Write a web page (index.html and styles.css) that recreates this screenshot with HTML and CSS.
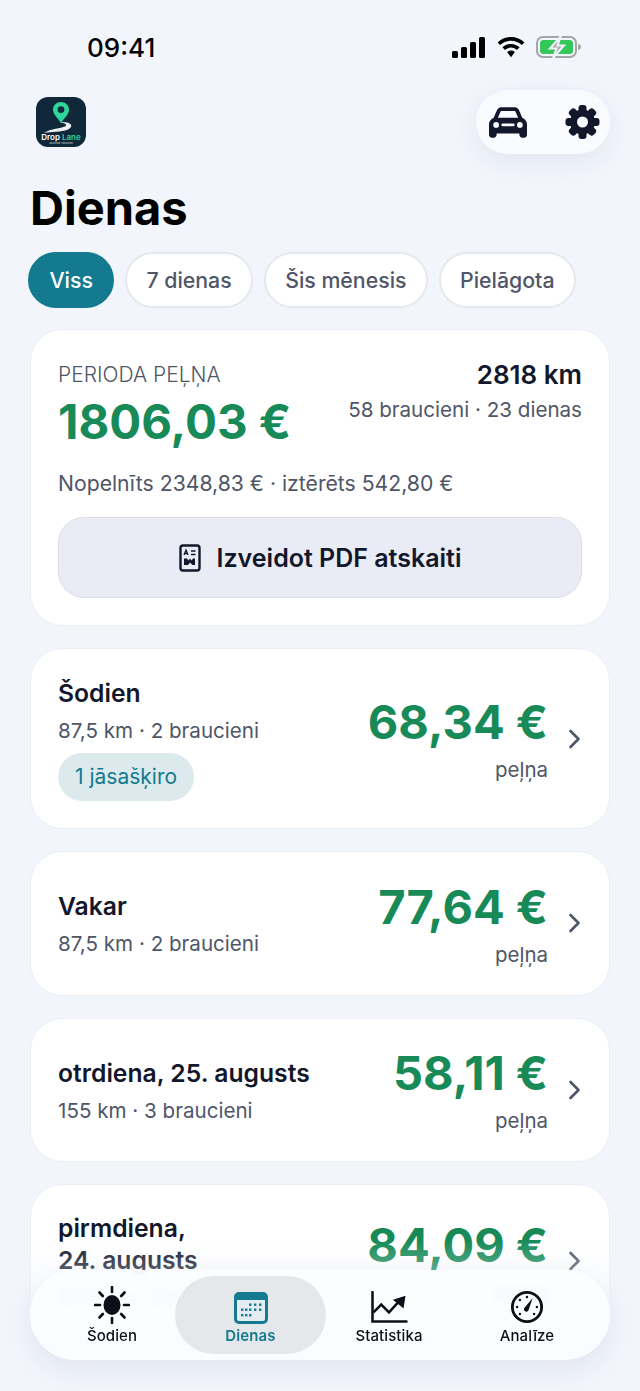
FILE: index.html
```html
<!DOCTYPE html>
<html lang="lv">
<head>
    <meta charset="UTF-8">
    <meta name="viewport" content="width=device-width, initial-scale=1.0">
    <title>Dienas</title>
    <link rel="stylesheet" href="styles.css">
</head>

<body>
    <div class="screen">
        <div class="status_bar">
            <span class="status_time">09:41</span>
            <div class="status_icons">
                <svg width="34" height="21" viewBox="0 0 34 21"><rect x="0" y="14" width="6" height="7" rx="1.5"/><rect x="9" y="10" width="6" height="11" rx="1.5"/><rect x="18" y="5" width="6" height="16" rx="1.5"/><rect x="27" y="0" width="6" height="21" rx="1.5"/></svg>
                <svg width="28" height="21" viewBox="0 0 28 21"><path d="M14 0C8.800 0 4.200 2 .6 5.400l2.500 2.700C6 5.300 9.800 3.700 14 3.700s8 1.600 10.900 4.400l2.500-2.700C23.800 2 19.200 0 14 0z"/><path d="M14 6.900c-3.300 0-6.300 1.300-8.600 3.400L8 13c1.600-1.500 3.700-2.400 6-2.400s4.400.9 6 2.400l2.600-2.700c-2.300-2.100-5.300-3.400-8.600-3.400z"/><path d="M14 13.600c-1.500 0-2.900.6-3.900 1.500l3.900 5.200 3.900-5.200c-1-.9-2.400-1.500-3.900-1.500z"/></svg>
                <svg width="46" height="22" viewBox="0 0 46 22"><rect x="1" y="1" width="39" height="20" rx="6" fill="none" stroke="#a3a7a6" stroke-width="2"/><rect x="4" y="4" width="33" height="14" rx="3.500" fill="#34c759"/><path d="M42 8c2 .4 3 1.500 3 3s-1 2.600-3 3z" fill="#a3a7a6"/><path d="M25 0 14 12.500h6.500L17 22l11-12.500h-6.500z" fill="#a9adae" stroke="#f2f5fc" stroke-width="2"/></svg>
            </div>
        </div>

        <div class="top_row">
            <div class="app_logo">
                <svg class="app_logo_art" width="50" height="32" viewBox="0 0 50 32"><path d="M25 0c-4.400 0-8 3.300-8 7.600 0 5.200 5.700 9.600 8 13.400 2.300-3.800 8-8.200 8-13.400C33 3.300 29.400 0 25 0z" fill="#2fd69a"/><circle cx="25" cy="7.600" r="3.400" fill="#10283a"/><path d="M24 20c5 1.500 8 2.500 5 4.500-4 1.800-14 2-21 6.500 7-1.500 17-.5 24-3.500 5-2.300 4-6-1-7-2-.4-4-.6-7-.5z" fill="#eef2f4"/></svg>
                <div class="app_logo_name">Drop <b>Lane</b></div>
                <div class="app_logo_tag">MILEAGE TRACKER</div>
            </div>
            <div class="top_actions">
                <svg width="38" height="31" viewBox="0 0 40 32"><path d="M9.500 1.500C10.500.5 12 0 13.500 0h13c1.500 0 3 .5 4 1.500 1.200 1.200 3.500 7 4.500 9.500 2.500 1.300 5 3.500 5 6.500V29c0 1.700-1.300 3-3 3h-2c-1.700 0-3-1.300-3-3v-1.500H8V29c0 1.700-1.300 3-3 3H3c-1.700 0-3-1.300-3-3V17.500c0-3 2.500-5.200 5-6.500 1-2.500 3.300-8.300 4.500-9.500zM12.500 4 9.300 11h21.400l-3.200-7zM7.500 15.500a3 3 0 1 0 0 6 3 3 0 0 0 0-6zm25 0a3 3 0 1 0 0 6 3 3 0 0 0 0-6zM14.500 17a1.500 1.500 0 0 0 0 3h11a1.500 1.500 0 0 0 0-3z" fill="#12172b" fill-rule="evenodd"/></svg>
                <svg width="35" height="34" viewBox="0 0 34 34"><g fill="#12172b"><circle cx="17" cy="17" r="12.500"/><rect x="13" y="0" width="8" height="34" rx="3"/><rect x="13" y="0" width="8" height="34" rx="3" transform="rotate(45 17 17)"/><rect x="13" y="0" width="8" height="34" rx="3" transform="rotate(90 17 17)"/><rect x="13" y="0" width="8" height="34" rx="3" transform="rotate(135 17 17)"/></g><circle cx="17" cy="17" r="5.500" fill="#fafbfe"/></svg>
            </div>
        </div>

        <h1 class="page_title">Dienas</h1>

        <div class="chips">
            <span class="chip chip_active">Viss</span>
            <span class="chip">7 dienas</span>
            <span class="chip">Šis mēnesis</span>
            <span class="chip">Pielāgota</span>
        </div>

        <div class="card summary">
            <div class="summary_top">
                <div>
                    <div class="summary_label">PERIODA PEĻŅA</div>
                    <div class="summary_amount">1806,03 €</div>
                </div>
                <div class="summary_right">
                    <div class="summary_km">2818 km</div>
                    <div class="day_sub">58 braucieni · 23 dienas</div>
                </div>
            </div>
            <div class="summary_note">Nopelnīts 2348,83 € · iztērēts 542,80 €</div>
            <div class="pdf_button">
                <svg width="22" height="28" viewBox="0 0 22 28" fill="none" stroke="#12172b"><rect x="1.500" y="1.500" width="19" height="25" rx="2.500" stroke-width="2.400"/><path d="M5 11l2-5 2 5M5.800 9.500h2.400M12 7h4.500M12 10.500h4.500" stroke-width="1.300"/><path d="M5 21v-6.500h3l1.500 2 1.500-2 1.500 2 1.500-2h2V21h-2.500l-2.500-2.500L9 21z" fill="#12172b" stroke="none"/></svg>
                <span>Izveidot PDF atskaiti</span>
            </div>
        </div>

        <div class="card day day_today">
            <div class="day_left">
                <div class="day_name">Šodien</div>
                <div class="day_sub">87,5 km · 2 braucieni</div>
                <span class="day_badge">1 jāsašķiro</span>
            </div>
            <div class="day_right">
                <div class="day_amount">68,34 €</div>
                <div class="day_caption">peļņa</div>
            </div>
            <svg class="day_chevron" width="14" height="20" viewBox="0 0 14 20"><path d="M2.500 2l8 8-8 8" fill="none" stroke="#4f5668" stroke-width="2.600" stroke-linecap="round" stroke-linejoin="round"/></svg>
        </div>

        <div class="card day">
            <div class="day_left">
                <div class="day_name">Vakar</div>
                <div class="day_sub">87,5 km · 2 braucieni</div>
            </div>
            <div class="day_right">
                <div class="day_amount">77,64 €</div>
                <div class="day_caption">peļņa</div>
            </div>
            <svg class="day_chevron" width="14" height="20" viewBox="0 0 14 20"><path d="M2.500 2l8 8-8 8" fill="none" stroke="#4f5668" stroke-width="2.600" stroke-linecap="round" stroke-linejoin="round"/></svg>
        </div>

        <div class="card day">
            <div class="day_left">
                <div class="day_name">otrdiena, 25. augusts</div>
                <div class="day_sub">155 km · 3 braucieni</div>
            </div>
            <div class="day_right">
                <div class="day_amount">58,11 €</div>
                <div class="day_caption">peļņa</div>
            </div>
            <svg class="day_chevron" width="14" height="20" viewBox="0 0 14 20"><path d="M2.500 2l8 8-8 8" fill="none" stroke="#4f5668" stroke-width="2.600" stroke-linecap="round" stroke-linejoin="round"/></svg>
        </div>

        <div class="card day day_last">
            <div class="day_left">
                <div class="day_name">pirmdiena,<br>24. augusts</div>
                <div class="day_sub">87,5 km · 2 braucieni</div>
            </div>
            <div class="day_right">
                <div class="day_amount">84,09 €</div>
                <div class="day_caption">peļņa</div>
            </div>
            <svg class="day_chevron" width="14" height="20" viewBox="0 0 14 20"><path d="M2.500 2l8 8-8 8" fill="none" stroke="#4f5668" stroke-width="2.600" stroke-linecap="round" stroke-linejoin="round"/></svg>
        </div>

        <div class="bottom_fade"></div>

        <div class="tabbar">
            <div class="tab">
                <svg width="36" height="38" viewBox="0 0 36 38"><ellipse cx="18" cy="19" rx="8.500" ry="10" fill="#0c0f18"/><path d="M18 1v5M18 32v5M1 19h5M30 19h5M5.500 6.500l3.300 3.500M27.200 28l3.300 3.500M5.500 31.500l3.300-3.500M27.200 10l3.300-3.500" stroke="#0c0f18" stroke-width="2.600" stroke-linecap="round"/></svg>
                <span>Šodien</span>
            </div>
            <div class="tab tab_active">
                <svg width="34" height="32" viewBox="0 0 34 32"><rect x="1.500" y="1.500" width="31" height="29" rx="3.500" fill="#e3edf1" stroke="#137a8f" stroke-width="3"/><path d="M2 3.500a2 2 0 0 1 2-2h26a2 2 0 0 1 2 2V8H2z" fill="#137a8f"/><g fill="#137a8f"><rect x="15" y="11.500" width="2.400" height="2.400"/><rect x="20" y="11.500" width="2.400" height="2.400"/><rect x="25" y="11.500" width="2.400" height="2.400"/><rect x="7" y="16.500" width="2.400" height="2.400"/><rect x="11" y="16.500" width="2.400" height="2.400"/><rect x="15" y="16.500" width="2.400" height="2.400"/><rect x="20" y="16.500" width="2.400" height="2.400"/><rect x="25" y="16.500" width="2.400" height="2.400"/><rect x="7" y="22" width="2.400" height="2.400"/><rect x="11" y="22" width="2.400" height="2.400"/><rect x="15" y="22" width="2.400" height="2.400"/></g></svg>
                <span>Dienas</span>
            </div>
            <div class="tab">
                <svg width="38" height="33" viewBox="0 0 38 34"><path d="M2 1v30.500h35" fill="none" stroke="#0c0f18" stroke-width="2.600" stroke-linecap="round"/><path d="M3 22l8-8 8 8 11-12" fill="none" stroke="#0c0f18" stroke-width="2.600"/><path d="M36 5l-2 13-11-9z" fill="#0c0f18"/></svg>
                <span>Statistika</span>
            </div>
            <div class="tab">
                <svg width="34" height="34" viewBox="0 0 36 36"><circle cx="18" cy="18" r="15.500" fill="none" stroke="#0c0f18" stroke-width="3"/><path d="M24 8.500 19.800 21a2.600 2.600 0 1 1-4.200-2.600z" fill="#0c0f18"/><g fill="#0c0f18"><circle cx="18" cy="7.500" r="1.300"/><circle cx="10.500" cy="10.500" r="1.300"/><circle cx="7.500" cy="18" r="1.300"/><circle cx="28.500" cy="18" r="1.300"/><circle cx="10.500" cy="25.500" r="1.300"/><circle cx="25.500" cy="25.500" r="1.300"/></g></svg>
                <span>Analīze</span>
            </div>
        </div>
    </div>
</body>
</html>
```

FILE: styles.css
```css
* {
    margin: 0;
    padding: 0;
    box-sizing: border-box;
    font-family: 'Inter', sans-serif;
}

body {
    background: #f2f5fc;
}

.screen {
    position: relative;
    width: 640px;
    height: 1391px;
    overflow: hidden;
    padding: 0 30px;
    background: #f2f5fc;
}

.status_bar {
    display: flex;
    justify-content: space-between;
    align-items: center;
    height: 94px;
    padding: 0 28px 0 57px;
}

.status_time {
    font-size: 26px;
    font-weight: 500;
    color: #000;
}

.status_icons {
    display: flex;
    align-items: center;
    gap: 11px;
}

.top_row {
    display: flex;
    justify-content: space-between;
    align-items: center;
    height: 64px;
    margin-top: -4px;
    padding-left: 6px;
}

.app_logo {
    display: flex;
    flex-direction: column;
    align-items: center;
    width: 50px;
    height: 50px;
    padding-top: 5px;
    background: #10283a;
    border-radius: 12px;
}

.app_logo_art {
    display: block;
}

.app_logo_name {
    margin-top: -1px;
    font-size: 8px;
    line-height: 9px;
    font-weight: 600;
    color: #fff;
    white-space: nowrap;
}

.app_logo_name b {
    font-weight: 600;
    color: #2fd69a;
}

.app_logo_tag {
    font-size: 2.500px;
    line-height: 3px;
    color: #dfe5e8;
    white-space: nowrap;
}

.top_actions {
    display: flex;
    justify-content: space-between;
    align-items: center;
    width: 134px;
    height: 64px;
    padding: 0 10px 0 13px;
    background: #fafbfe;
    border-radius: 32px;
    box-shadow: 0 8px 28px rgba(30, 40, 70, 0.07);
}

.page_title {
    margin-top: 26px;
    font-size: 47px;
    line-height: 56px;
    font-weight: 700;
    color: #000;
}

.chips {
    display: flex;
    gap: 10.500px;
    margin: 16px 0 21px -2px;
}

.chip {
    display: flex;
    align-items: center;
    height: 56px;
    padding: 0 19.500px;
    background: #fff;
    border: 2px solid #e6e8ee;
    border-radius: 28px;
    font-size: 21.300px;
    font-weight: 500;
    color: #4f5668;
}

.chip_active {
    background: #137a8f;
    border-color: #137a8f;
    color: #fff;
}

.card {
    background: #fff;
    border: 1px solid #eceef3;
    border-radius: 32px;
}

.summary {
    height: 297px;
    padding: 27px 27px 0;
}

.summary_top {
    display: flex;
    justify-content: space-between;
}

.summary_label {
    font-size: 21px;
    font-weight: 300;
    line-height: 36px;
    color: #4f5668;
}

.summary_amount {
    margin-top: 4px;
    font-size: 47.400px;
    line-height: 50px;
    font-weight: 700;
    color: #178a58;
}

.summary_right {
    text-align: right;
}

.summary_km {
    font-size: 26px;
    line-height: 35px;
    font-weight: 600;
    color: #12172b;
}

.day_sub {
    font-size: 20.600px;
    line-height: 36px;
    color: #4f5668;
}

.summary_note {
    margin-top: 18px;
    font-size: 21.200px;
    line-height: 36px;
    color: #4f5668;
}

.pdf_button {
    display: flex;
    justify-content: center;
    align-items: center;
    gap: 16px;
    height: 81px;
    margin-top: 16px;
    background: #e9ecf5;
    border: 1px solid #dcdfe8;
    border-radius: 26px;
    font-size: 25px;
    font-weight: 600;
    color: #12172b;
}

.day {
    display: flex;
    align-items: center;
    height: 144.500px;
    margin-top: 22px;
    padding: 0 27px;
}

.day_today {
    height: 181px;
}

.day_last {
    height: 154px;
}

.day_left {
    flex: 1;
    padding-top: 6px;
}

.day_today .day_left {
    padding-top: 0;
}

.day_name {
    margin-bottom: 4px;
    font-size: 24.700px;
    line-height: 32px;
    font-weight: 600;
    color: #12172b;
}

.day_badge {
    display: inline-block;
    margin-top: 4px;
    padding: 0 17px;
    background: #dceaee;
    border-radius: 24px;
    font-size: 21px;
    line-height: 48px;
    color: #137a8f;
}

.day_right {
    margin-right: 20px;
    text-align: right;
}

.day_amount {
    font-size: 47px;
    line-height: 56px;
    font-weight: 700;
    color: #178a58;
}

.day_caption {
    margin-top: 7px;
    font-size: 20.500px;
    line-height: 26px;
    color: #4f5668;
}

.bottom_fade {
    position: absolute;
    left: 0;
    right: 0;
    top: 1240px;
    bottom: 0;
    background: linear-gradient(to bottom, rgba(242, 245, 252, 0), rgba(242, 245, 252, 0.3) 20%, rgba(242, 245, 252, 0.95) 70%, #f2f5fc);
}

.tabbar {
    position: absolute;
    left: 30px;
    right: 30px;
    top: 1270px;
    display: grid;
    grid-template-columns: 126px 151px 126px 1fr;
    height: 90px;
    padding: 6px 8px 6px 19px;
    background: rgba(252, 253, 255, 0.9);
    backdrop-filter: blur(3px);
    border-radius: 45px;
    box-shadow: 0 10px 30px rgba(30, 40, 70, 0.08);
}

.tab {
    display: flex;
    flex-direction: column;
    align-items: center;
    justify-content: flex-end;
    gap: 3px;
    padding-bottom: 9px;
    font-size: 15px;
    line-height: 18px;
    font-weight: 500;
    letter-spacing: 0.1px;
    color: #0c0f18;
}

.tab_active {
    background: #e5e8ea;
    border-radius: 39px;
    font-weight: 600;
    color: #137a8f;
}
```
